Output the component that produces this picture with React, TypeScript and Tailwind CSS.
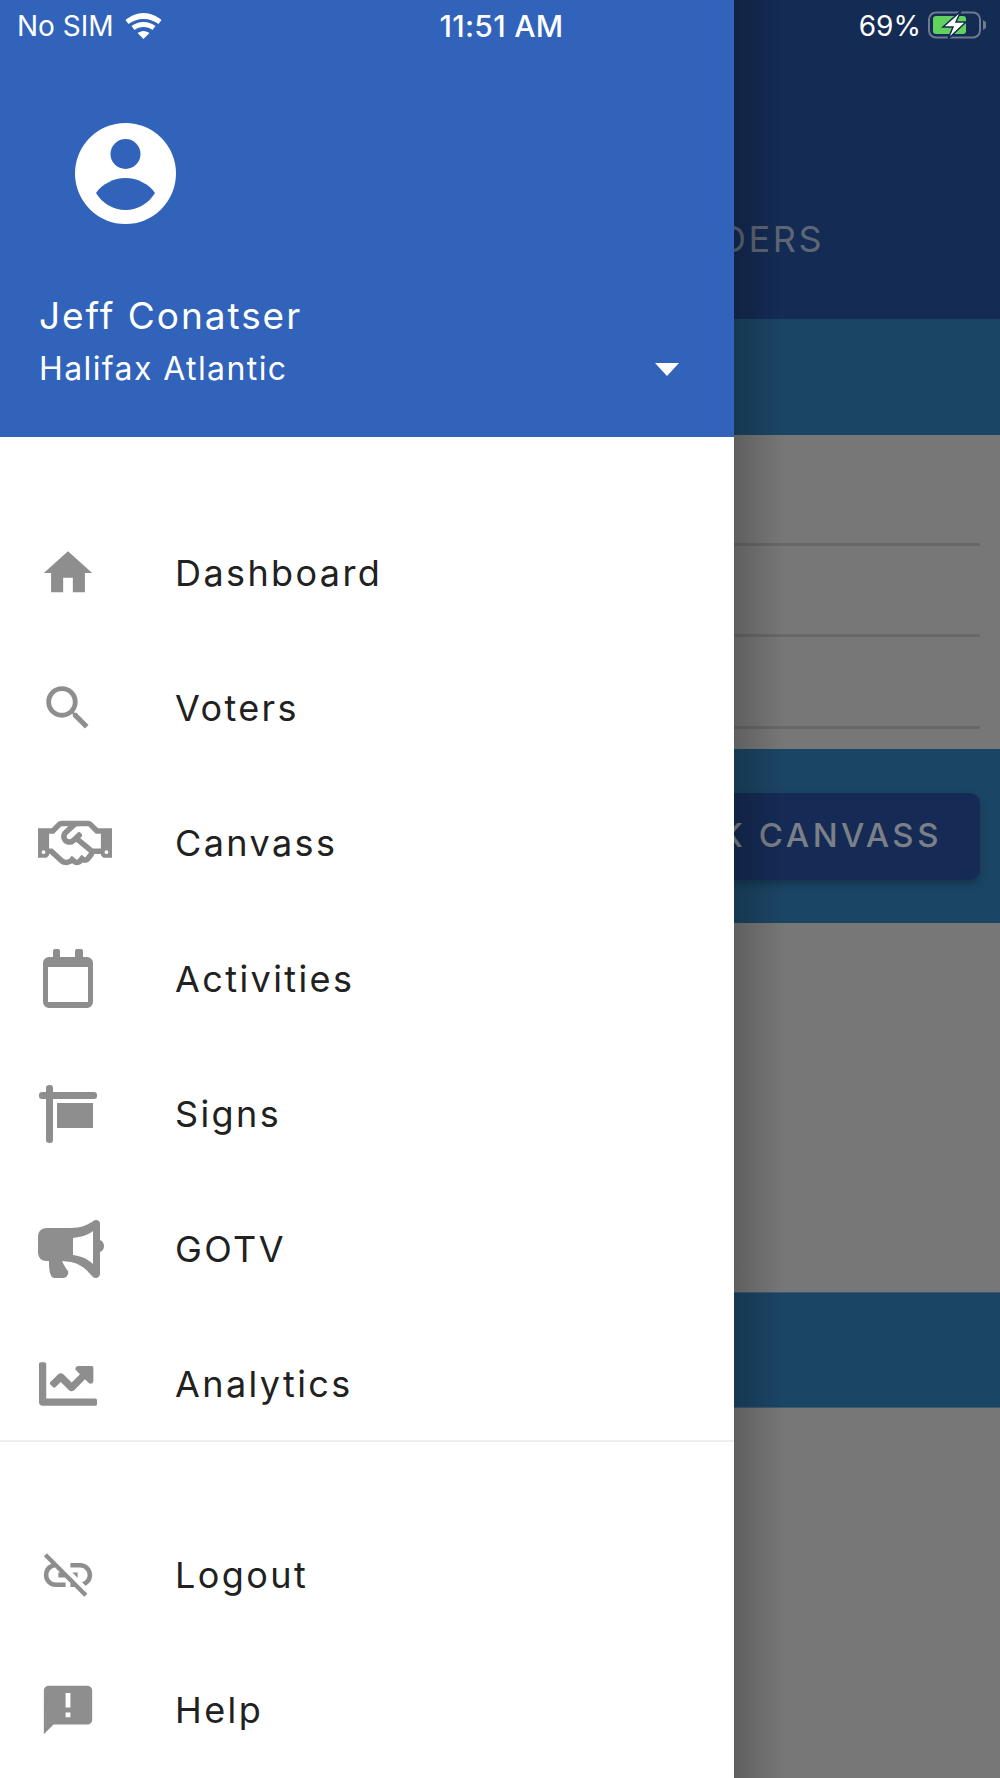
import { FaRegHandshake, FaChartLine } from "react-icons/fa";
import { MdHome, MdSearch, MdLinkOff, MdAnnouncement } from "react-icons/md";
import type { ReactNode } from "react";

const font = { fontFamily: "Inter, Roboto, sans-serif" };

function CalendarIcon() {
  return (
    <svg viewBox="0 0 50 59" className="h-[59px] w-[50px]" fill="#8e8e8e">
      <path
        fillRule="evenodd"
        d="M10 2a2 2 0 0 1 2-2h3a2 2 0 0 1 2 2v6h15V2a2 2 0 0 1 2-2h4a2 2 0 0 1 2 2v6h4a6 6 0 0 1 6 6v39a6 6 0 0 1-6 6H6a6 6 0 0 1-6-6V14a6 6 0 0 1 6-6h4zM5 18v35h40V18z"
      />
    </svg>
  );
}

function SignIcon() {
  return (
    <svg viewBox="0 0 58 58" className="h-[58px] w-[58px]" fill="#8e8e8e">
      <rect x="7" y="0" width="7" height="58" rx="3" />
      <rect x="0" y="7" width="58" height="7" rx="3" />
      <rect x="18" y="18" width="36" height="25" />
    </svg>
  );
}

function BullhornIcon() {
  return (
    <svg viewBox="0 0 66 58" className="h-[58px] w-[66px]" fill="#8e8e8e">
      <path
        fillRule="evenodd"
        d="M58 0c3 0 4 2 4 4v16c3 1 4 4 4 6s-1 5-4 6v22c0 2-2 4-4 4-2 0-3-1-4-2-5-6-11-12-21-14-3 0-6-1-9-1 2 5 6 10 6 10 1 3-1 7-5 7H17c-3 0-4-2-5-5-1-4-1-9-1-12H8c-5 0-8-4-8-9V17c0-6 4-9 9-9h24c9 0 16-3 21-6 1-1 2-2 4-2zm-3 11c-5 4-12 6-20 7v17c8 1 15 4 20 9z"
      />
    </svg>
  );
}

function DrawerItem({ icon, label, iconClass = "" }: { icon: ReactNode; label: string; iconClass?: string }) {
  return (
    <div className="flex h-[111px] items-center">
      <div className={`flex w-[136px] shrink-0 items-center justify-center ${iconClass}`}>{icon}</div>
      <span className="ml-[39px] text-[36px] tracking-[2.4px] text-[#212121]">{label}</span>
    </div>
  );
}

const mainItems = [
  { label: "Dashboard", icon: <MdHome size={58} color="#8e8e8e" /> },
  { label: "Voters", icon: <MdSearch size={58} color="#8e8e8e" /> },
  { label: "Canvass", icon: <FaRegHandshake size={74} color="#8e8e8e" />, iconClass: "pl-[13px]" },
  { label: "Activities", icon: <CalendarIcon /> },
  { label: "Signs", icon: <SignIcon /> },
  { label: "GOTV", icon: <BullhornIcon />, iconClass: "pl-[5px]" },
  { label: "Analytics", icon: <FaChartLine size={58} color="#8e8e8e" /> },
];

function Drawer() {
  return (
    <div className="flex h-full w-[734px] shrink-0 flex-col bg-white">
      <div className="h-[437px] shrink-0 bg-[#3163ba] pl-[39px] pt-[123px] text-white">
        <svg viewBox="0 0 101 101" className="ml-[36px] h-[101px] w-[101px]">
          <circle cx="50.5" cy="50.5" r="50.5" fill="#fff" />
          <circle cx="50.5" cy="31" r="15" fill="#3163ba" />
          <path d="M21 70c6-9 18-15 29.500-15S74 61 80 70c-6 10-17 17-29.500 17S27 80 21 70z" fill="#3163ba" />
        </svg>
        <div className="mt-[70px] text-[37px] leading-[44px] tracking-[1.95px]">Jeff Conatser</div>
        <div className="mt-[9px] flex items-center justify-between pr-[55px]">
          <div className="text-[32px] leading-[44px] tracking-[1.4px]">Halifax Atlantic</div>
          <div className="h-0 w-0 border-x-[12px] border-t-[13px] border-x-transparent border-t-white" />
        </div>
      </div>
      <div className="flex flex-col gap-[24.2px] pt-[80.5px]">
        {mainItems.map((item) => (
          <DrawerItem key={item.label} icon={item.icon} label={item.label} iconClass={item.iconClass} />
        ))}
      </div>
      <div className="h-[2px] shrink-0 bg-[#eeeeee]" />
      <div className="flex flex-col gap-[24.2px] pt-[78px]">
        <DrawerItem icon={<MdLinkOff size={58} color="#8e8e8e" />} label="Logout" />
        <DrawerItem icon={<MdAnnouncement size={58} color="#8e8e8e" />} label="Help" />
      </div>
    </div>
  );
}

function DimmedPage() {
  return (
    <div className="relative h-full min-w-0 flex-1 overflow-hidden bg-[#777777]">
      <div className="flex h-[319px] items-end justify-end bg-[#142b54] pb-[58px] pr-[176px]">
        <span className="whitespace-nowrap text-[36px] leading-[44px] tracking-[2.5px] text-[#5d6675]">DERS</span>
      </div>
      <div className="h-[116px] bg-[#1b4565]" />
      <div className="flex h-[314px] flex-col pr-[20px] pt-[108px]">
        <div className="h-[3px] bg-[#686868]" />
        <div className="mt-[88px] h-[3px] bg-[#686868]" />
        <div className="mt-[89px] h-[3px] bg-[#686868]" />
      </div>
      <div className="flex h-[174px] items-center justify-end bg-[#1b4565] pr-[20px]">
        <div className="flex h-[87px] w-full items-center justify-end rounded-r-[10px] bg-[#152b55] pr-[38px] shadow-[0_4px_8px_rgba(0,0,0,0.25)]">
          <span className="whitespace-nowrap text-[33px] font-medium tracking-[3.5px] text-[#7b7f87]">K CANVASS</span>
        </div>
      </div>
      <div className="h-[369px]" />
      <div className="h-[116px] border-y border-[#3a5a76] bg-[#1b4565]" />
      <div className="absolute inset-y-0 left-0 w-[50px] bg-gradient-to-r from-black/20 to-transparent" />
    </div>
  );
}

function StatusBar() {
  return (
    <div className="absolute inset-x-0 top-0 grid h-[52px] grid-cols-3 items-center pl-[17px] pr-[12px] text-[28px] text-white">
      <div className="flex items-center gap-[11px]">
        <span>No SIM</span>
        <svg viewBox="0 0 36 26" className="h-[26px] w-[37px]" fill="#fff">
          <path d="M18 0c7 0 13 3 18 7l-3 4c-4-3-9-5-15-5S7 8 3 11L0 7c5-4 11-7 18-7z" />
          <path d="M18 9c5 0 9 2 12 4l-3 4c-2-2-6-3-9-3s-7 1-9 3l-3-4c3-2 7-4 12-4z" />
          <path d="M18 18c2 0 4 1 6 2l-6 6-6-6c2-1 4-2 6-2z" />
        </svg>
      </div>
      <div className="pr-[2px] text-center text-[30px] font-medium tracking-[0.3px]">11:51 AM</div>
      <div className="flex items-center justify-end gap-[7px]">
        <span>69%</span>
        <svg viewBox="0 0 60 28" className="-mt-[2px] h-[28px] w-[60px]">
          <rect x="1" y="1.500" width="51" height="25" rx="7" fill="none" stroke="#6d7a90" strokeWidth="2" />
          <rect x="5" y="5" width="33" height="18" rx="3" fill="#62d25f" />
          <path d="M55 9l3 2v6l-3 2z" fill="#6d7a90" />
          <path d="M33 0L15 16h10l-5 12 18-17H28z" fill="#fff" stroke="#142b54" strokeWidth="1.500" />
        </svg>
      </div>
    </div>
  );
}

export default function App() {
  return (
    <div className="relative flex h-[1778px] w-[1000px] overflow-hidden" style={font}>
      <Drawer />
      <DimmedPage />
      <StatusBar />
    </div>
  );
}
